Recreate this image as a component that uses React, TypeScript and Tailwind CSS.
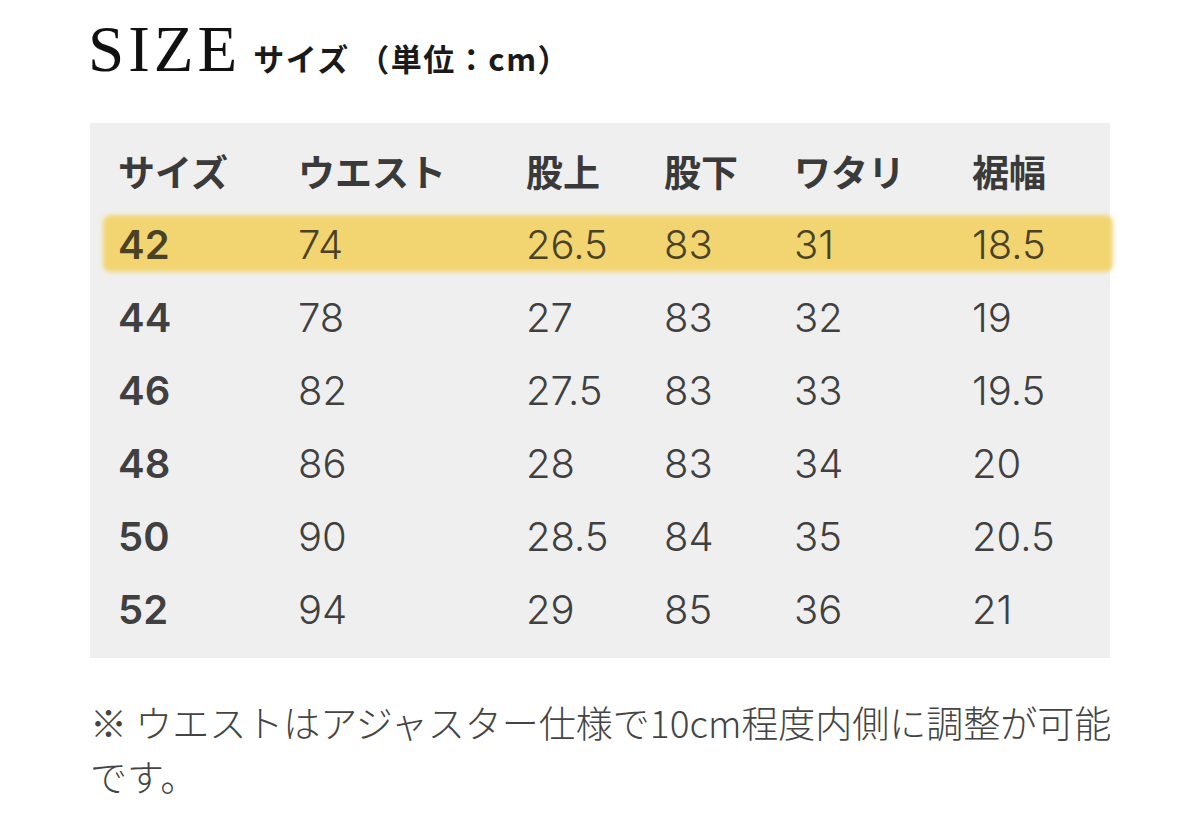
const header = ["サイズ", "ウエスト", "股上", "股下", "ワタリ", "裾幅"];

const rows = [
  ["42", "74", "26.5", "83", "31", "18.5"],
  ["44", "78", "27", "83", "32", "19"],
  ["46", "82", "27.5", "83", "33", "19.5"],
  ["48", "86", "28", "83", "34", "20"],
  ["50", "90", "28.5", "84", "35", "20.5"],
  ["52", "94", "29", "85", "36", "21"],
];

const cols = "grid grid-cols-[180px_228px_138px_130px_178px_1fr] items-center h-[73px] pl-[28px]";

export default function App() {
  return (
    <div className="w-[1200px] h-[813px] bg-white overflow-hidden text-[#3c3c3c] font-['Liberation_Sans','Noto_Sans_CJK_JP',sans-serif]">
      <div className="flex items-baseline pl-[88px] pt-[17px] h-[123px]">
        <span className="font-['Liberation_Serif',serif] text-[65px] leading-none tracking-[4px] text-[#111]">
          SIZE
        </span>
        <span className="ml-[12px] font-['Noto_Sans_CJK_JP',sans-serif] font-bold text-[31px] leading-none tracking-[1.5px] text-[#1a1a1a]">
          サイズ （単位：cm）
        </span>
      </div>

      <div className="relative mx-[90px] w-[1020px] bg-[#efefef] py-[12px]">
        {/* highlighter stroke behind the 42 row */}
        <div className="absolute left-[13px] top-[92px] w-[1010px] h-[57px] rounded-[8px] bg-[#f2d571] blur-[2px]" />

        <div className={`${cols} relative font-['Noto_Sans_CJK_JP',sans-serif] font-bold text-[37px] text-[#3a3a3a]`}>
          {header.map((h) => (
            <span key={h}>{h}</span>
          ))}
        </div>

        {rows.map((r, i) => (
          <div
            key={r[0]}
            className={`${cols} relative font-['Inter','Liberation_Sans',sans-serif] text-[40px] ${i === 0 ? "text-[#4a4225]" : "text-[#404040]"}`}
          >
            {r.map((v, j) => (
              <span key={j} className={j === 0 ? "font-semibold" : "font-light"}>
                {v}
              </span>
            ))}
          </div>
        ))}
      </div>

      <p className="mt-[37px] pl-[90px] text-[37px] leading-[54px] text-[#444] font-['Noto_Sans_CJK_JP',sans-serif] font-light">
        ※ ウエストはアジャスター仕様で10cm程度内側に調整が可能
        <br />
        です。
      </p>
    </div>
  );
}
